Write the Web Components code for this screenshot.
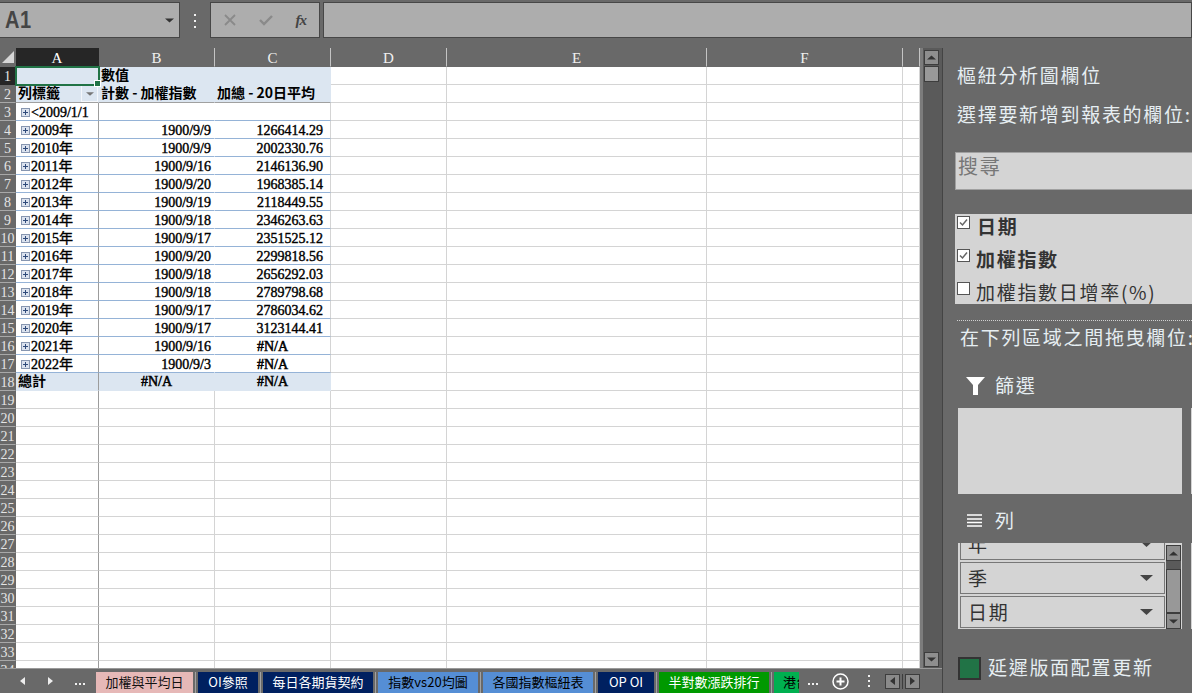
<!DOCTYPE html>
<html lang="zh-Hant"><head><meta charset="utf-8"><title>Excel</title>
<style>
html,body{margin:0;padding:0;background:#696969;overflow:hidden}
body{width:1192px;height:693px;font-family:"Noto Sans CJK TC",sans-serif}
</style></head><body>
<x-app></x-app>
<script>
const CJK='"Noto Sans CJK TC"';
function def(name,html,init){
  customElements.define(name,class extends HTMLElement{
    constructor(){super();const r=this.attachShadow({mode:'open'});r.innerHTML=typeof html==='function'?html(this):html;}
    connectedCallback(){if(init&&!this._i){this._i=1;init(this,this.shadowRoot);}}
  });
}
const dn=(c='#444',w=13,h=6)=>`<svg width="${w}" height="${h}" viewBox="0 0 13 6"><path d="M0 0H13L6.5 6Z" fill="${c}"/></svg>`;
const up=(c='#333',w=9,h=5)=>`<svg width="${w}" height="${h}" viewBox="0 0 13 6"><path d="M0 6H13L6.5 0Z" fill="${c}"/></svg>`;
const tick='<svg width="9" height="9" viewBox="0 0 9 9"><path d="M1 4.5L3.5 7L8 1.5" fill="none" stroke="#666" stroke-width="1.5"/></svg>';

def('x-formula-bar',`<style>
:host{display:flex;height:48px;box-sizing:border-box;padding-top:2px;align-items:flex-start;background:#696969}
.b{height:36px;box-sizing:border-box;background:#adadad;border:1px solid #474747;display:flex;align-items:center}
.name{width:180px;border-left:0;padding:0 5px;justify-content:space-between;font:700 20px "Liberation Sans Narrow","Liberation Sans",sans-serif;color:#454545;letter-spacing:.5px}
.name span{transform:scaleY(1.2);display:block}
.grip{width:30px;display:flex;flex-direction:column;gap:4px;align-items:center;padding-top:12px}
.grip i{width:2px;height:2px;background:#f2f2f2;display:block}
.fn{width:110px;justify-content:space-between;padding:0 13px 0 13px}
.fn em{font:italic 700 15px "Liberation Serif",serif;color:#444;letter-spacing:-1px}
.fi{margin-left:3px;flex:1}
</style>
<div class="b name"><span>A1</span>${dn('#333',9,5)}</div>
<div class="grip"><i></i><i></i><i></i></div>
<div class="b fn">
<svg width="12" height="12" viewBox="0 0 12 12"><path d="M1 1L11 11M11 1L1 11" stroke="#8a8a8a" stroke-width="1.8"/></svg>
<svg width="14" height="12" viewBox="0 0 14 12"><path d="M1 6L5 10L13 2" stroke="#8a8a8a" stroke-width="2.4" fill="none"/></svg>
<em>fx</em></div>
<div class="b fi"></div>`);

const data=[['2009年','1900/9/9','1266414.29'],['2010年','1900/9/9','2002330.76'],['2011年','1900/9/16','2146136.90'],['2012年','1900/9/20','1968385.14'],['2013年','1900/9/19','2118449.55'],['2014年','1900/9/18','2346263.63'],['2015年','1900/9/17','2351525.12'],['2016年','1900/9/20','2299818.56'],['2017年','1900/9/18','2656292.03'],['2018年','1900/9/18','2789798.68'],['2019年','1900/9/17','2786034.62'],['2020年','1900/9/17','3123144.41'],['2021年','1900/9/16','#N/A'],['2022年','1900/9/3','#N/A']];

def('x-sheet',()=>{
 const plus=`<svg class="pm" width="9" height="9" viewBox="0 0 9 9"><rect x=".5" y=".5" width="8" height="8" fill="#dbe2ee" stroke="#8796b0"/><path d="M2 4.5H7M4.5 2V7" stroke="#2f4a7a"/></svg>`;
 let h=`<div class="c corner"><svg width="12" height="12" viewBox="0 0 12 12"><path d="M12 0V12H0Z" fill="#d6d6d6"/></svg></div>`;
 h+=`<div class="c ch sel">A</div>`;
 ['B','C','D','E','F',''].forEach(l=>h+=`<div class="c ch">${l}</div>`);
 for(let r=1;r<=34;r++){
  h+=`<div class="c rh ${r==1?'rsel':''}">${r}</div>`;
  let a='',b='',c='',ca='g',cb='g',cc='g';
  if(r==1){ca='hd active';cb='hd nb';cc='hd';b='<b>數值</b>';}
  else if(r==2){ca='hd ln';cb='hd ln';cc='hd ln';a=`<b>列標籤</b><span class="fb">${dn('#777',8,4)}</span>`;b='<b>計數 - 加權指數</b>';c='<b>加總 - 20日平均</b>';}
  else if(r==3){ca='colA bl';cb='bl nr';cc='bl';a=plus+'<span class="t">&lt;2009/1/1</span>';}
  else if(r<=17){const d=data[r-4];ca='colA bl';cb='bl nr num rb';cc='bl num';a=plus+`<span class="t">${d[0]}</span>`;b=d[1];c=d[2];if(c=='#N/A')cc='bl err';}
  else if(r==18){ca='hd colA tot';cb='hd err nr';cc='hd err';a='<b>總計</b>';b='#N/A';c='#N/A';}
  else {ca='colA';}
  h+=`<div class="c ${ca}">${a}</div><div class="c ${cb}">${b}</div><div class="c ${cc}">${c}</div>`;
  for(let k=0;k<4;k++)h+=`<div class="c g"></div>`;
 }
 return `<style>
:host{display:block;width:920px;height:620px;overflow:hidden;background:#fff}
.grid{display:grid;grid-template-columns:16px 83px 116px 116px 116px 260px 196px 17px;grid-template-rows:19px;grid-auto-rows:18px;font:14px "Liberation Serif",${CJK},serif;color:#000}
.c{box-sizing:border-box;border-right:1px solid #d4d4d4;border-bottom:1px solid #d4d4d4;display:flex;align-items:center;white-space:nowrap;line-height:17px;min-width:0;-webkit-text-stroke:.4px #000;padding-top:1px}
.corner{background:#696969;border:0;padding:3px 0 0 2px;align-items:flex-start}
.ch{background:#696969;border:0;border-right:1px solid #c4c4c4;border-bottom:1px solid #696969;color:#f0f0f0;justify-content:center;font-size:15px;-webkit-text-stroke:0;padding-top:2px}
.ch.sel{background:#262626;border-right-color:#262626;border-bottom-color:#262626;color:#fff}
.rh{background:#696969;border-right:1px solid #696969;border-bottom:1px solid #a8a8a8;color:#e4e4e4;justify-content:center;font-size:14px;-webkit-text-stroke:0}
.rsel{background:#262626;border-bottom-color:#262626}
.hd{background:#dce6f1;border-right-color:#dce6f1;border-bottom-color:#dce6f1;padding-left:2px;padding-top:0}
.hd b{font:700 14px ${CJK},sans-serif;letter-spacing:0;-webkit-text-stroke:0;margin-top:-3px}
.hd.tot{padding-left:2px}
.hd.ln{border-bottom-color:#a0a0a0;position:relative}
.fb{position:absolute;right:0;top:0;width:17px;height:17px;box-sizing:border-box;border:1px solid #f4f7fb;background:#dce6f1;display:flex;align-items:center;justify-content:center}
.active{position:relative;outline:2px solid #217346;outline-offset:-1px;z-index:2}
.active::after{content:"";position:absolute;right:-3px;bottom:-3px;width:5px;height:5px;background:#217346;border:1px solid #fff}
.colA{border-right-color:#9c9c9c;padding-left:5px}
.pm{flex:none;margin-right:1px}
.bl{border-bottom-color:#95b3d7}
.nr{border-right-color:#fff}
.hd.nr{border-right-color:#dce6f1}
.num{justify-content:flex-end;padding-right:7px}
.rb{padding-right:3px}
.err{justify-content:center;-webkit-text-stroke:.5px #000;padding-left:0}
</style><div class="grid">${h}</div>`;
});

def('x-vscroll',`<style>
:host{display:flex;flex-direction:column;box-sizing:border-box;width:22px;height:620px;background:#5a5a5a;border-left:3px solid #7c7c7c;padding:2px 3px 0 1px}
.b{height:15px;box-sizing:border-box;background:#8e8e8e;border:1px solid #3d3d3d;display:flex;align-items:center;justify-content:center;flex:none}
.th{height:16px;margin-top:1px;box-sizing:border-box;background:#999;border:1px solid #3d3d3d;flex:none}
.sp{flex:1}
</style><div class="b">${up()}</div><div class="th"></div><div class="sp"></div><div class="b" style="margin-bottom:1px">${dn('#333',9,5)}</div>`);

def('x-tab',`<style>
:host{display:flex;box-sizing:border-box;margin-left:2px;padding-left:2px;border-left:1px solid #a2a2a2;height:22px;flex:none}
div{width:100%;height:22px;display:flex;align-items:center;justify-content:var(--jc,center);padding-left:var(--pl,0);font:13px ${CJK},sans-serif;overflow:hidden;white-space:nowrap;background:var(--bg);color:var(--fg);padding-bottom:3px;box-sizing:border-box}
</style><div><slot></slot></div>`);

def('x-tabs',`<style>
:host{display:flex;height:25px;box-sizing:border-box;padding-top:3px;border-top:1px solid #9a9a9a;background:#696969;align-items:flex-start;overflow:hidden}
.nav{display:flex;width:93px;flex:none;height:22px;align-items:center;color:#fff;padding-bottom:4px;box-sizing:border-box}
.nav svg{margin-left:20px}
.nav svg+svg{margin-left:23px}
.dots{display:flex;gap:2px;margin-left:22px;margin-top:6px}
.dots i{width:2px;height:2px;background:#f0f0f0;display:block}
.end{display:flex;align-items:center;height:22px;flex:none;padding-bottom:4px;box-sizing:border-box}
.end .dots{margin:6px 0 0 9px}
.add{margin-left:14px}
.vd{display:flex;flex-direction:column;gap:3px;margin-left:19px}
.vd i{width:2px;height:2px;background:#f0f0f0;display:block}
.sb{display:flex;margin-left:15px;align-items:stretch}
.sb span{width:15px;height:15px;box-sizing:border-box;background:#8a8a8a;border:1px solid #3d3d3d;display:flex;align-items:center;justify-content:center}
.sb b{width:1px;background:#3d3d3d;margin:0 2px;display:block}
</style>
<div class="nav">
<svg width="5" height="8" viewBox="0 0 5 8"><path d="M5 0V8L0 4Z" fill="#eee"/></svg>
<svg width="5" height="8" viewBox="0 0 5 8"><path d="M0 0V8L5 4Z" fill="#eee"/></svg>
<div class="dots"><i></i><i></i><i></i></div>
</div>
<x-tab style="width:100px;--bg:#e6b8b7;--fg:#111;border-left-color:#696969;margin-left:0">加權與平均日</x-tab>
<x-tab style="width:63px;--bg:#002060;--fg:#fff">OI參照</x-tab>
<x-tab style="width:113px;--bg:#002060;--fg:#fff">每日各期貨契約</x-tab>
<x-tab style="width:103px;--bg:#558ed5;--fg:#000">指數vs20均圖</x-tab>
<x-tab style="width:113px;--bg:#558ed5;--fg:#000">各國指數樞紐表</x-tab>
<x-tab style="width:59px;--bg:#002060;--fg:#fff">OP OI</x-tab>
<x-tab style="width:113px;--bg:#009900;--fg:#fff">半對數漲跌排行</x-tab>
<x-tab style="width:28px;--bg:#00b050;--fg:#000;--jc:flex-start;--pl:9px">港台指數</x-tab>
<div class="end">
<div class="dots"><i></i><i></i><i></i></div>
<svg class="add" width="17" height="17" viewBox="0 0 17 17"><circle cx="8.5" cy="8.5" r="7.5" fill="none" stroke="#fff" stroke-width="1.5"/><path d="M4.5 8.5H12.5M8.5 4.5V12.5" stroke="#fff" stroke-width="2"/></svg>
<div class="vd"><i></i><i></i><i></i></div>
<div class="sb"><span><svg width="5" height="8" viewBox="0 0 5 8"><path d="M5 0V8L0 4Z" fill="#333"/></svg></span><b></b><span><svg width="5" height="8" viewBox="0 0 5 8"><path d="M0 0V8L5 4Z" fill="#333"/></svg></span></div>
</div>`);

def('x-check',`<style>:host{display:block;width:13px;height:13px;flex:none}
 div{width:13px;height:13px;box-sizing:border-box;background:#fff;border:1px solid #555;display:flex;align-items:center;justify-content:center}</style>
 <div><slot></slot></div>`);

def('x-field',`<style>
:host{display:flex;height:33px;flex:none;box-sizing:border-box;padding-left:2px;color:#333}
x-check{margin-top:6px}
span{margin-left:var(--ml,7px);line-height:31px;font-size:19px;letter-spacing:1.7px;font-weight:var(--w,400);white-space:nowrap}
</style><x-check></x-check><span><slot></slot></span>`,(el,r)=>{if(el.hasAttribute('checked'))r.querySelector('x-check').innerHTML=tick;});

def('x-pill',`<style>
:host{display:flex;flex:none;width:205px;height:32px;margin-left:1px;box-sizing:border-box;background:#d4d4d4;border:1px solid #777;align-items:center;justify-content:space-between;padding:0 11px 0 7px;font-size:19px;letter-spacing:1.7px;color:#333}
span{margin-top:-2px}
</style><span><slot></slot></span>${dn('#444')}`);

def('x-panel',`<style>
:host{display:flex;flex-direction:column;box-sizing:border-box;width:250px;height:645px;background:#696969;border-left:1px solid #444;padding-left:12px;overflow:hidden;font-size:19px;letter-spacing:1.7px;color:#e6eef2;white-space:nowrap}
.line{height:30px;line-height:28px;flex:none}
.title{margin:13px 0 0 2px}
.sel{margin:9px 0 0 2px}
.search{height:38px;flex:none;margin-top:22px;box-sizing:border-box;background:#d4d4d4;border:1px solid #a0a0a0;border-right:0;color:#777;padding-left:2px;line-height:26px;font-size:20px}
.list{height:90px;flex:none;margin-top:24px;background:#d4d4d4;overflow:hidden}
.inner{margin-top:-4px}
.dot{height:0;flex:none;margin:16px 0 0 2px;border-top:1px dotted #d0d0d0}
.drag{margin:2px 0 0 5px}
.h{display:flex;align-items:center}
.h span{margin-top:-3px}
.filter{margin:18px 0 0 11px}
.rows{margin:12px 0 0 12px}
.h svg{flex:none;margin-top:-1px}
.boxes{display:flex;gap:9px;margin:7px 0 0 3px;height:86px;flex:none}
.boxes>div{background:#d4d4d4;height:86px;flex:none}
.boxes>.a{width:224px}.boxes>.r{width:20px}
.boxes>.area{width:224px;display:flex;box-sizing:border-box;border-left:1px solid #d4d4d4}
.pills{width:206px;flex:none;display:flex;flex-direction:column;justify-content:flex-end;gap:2px;overflow:hidden;padding-bottom:1px;box-sizing:border-box;height:86px;background:#d4d4d4}
.vs{width:17px;flex:none;background:#d4d4d4;box-sizing:border-box;padding:2px 1px 2px 1px;display:flex;flex-direction:column;height:86px}
.vs i{display:flex;align-items:center;justify-content:center;height:16px;box-sizing:border-box;background:#8e8e8e;border:1px solid #3d3d3d;flex:none}
.vs u{display:block;height:8px;background:#5a5a5a;flex:none}
.vs s{display:block;height:44px;background:#989898;border:1px solid #3d3d3d;box-sizing:border-box;flex:none}
.defer{display:flex;align-items:center;margin:28px 0 0 3px;height:23px;flex:none}
.sw{width:23px;height:23px;box-sizing:border-box;background:#217346;border:2px solid #333;flex:none}
.defer span{margin-left:7px;margin-top:-4px}
</style>
<div class="line title">樞紐分析圖欄位</div>
<div class="line sel">選擇要新增到報表的欄位:</div>
<div class="search">搜尋</div>
<div class="list"><div class="inner">
<x-field checked style="--w:700">日期</x-field>
<x-field checked style="--w:700;--ml:6px">加權指數</x-field>
<x-field style="--ml:6px">加權指數日增率(%)</x-field>
</div></div>
<div class="dot"></div>
<div class="line drag">在下列區域之間拖曳欄位:</div>
<div class="line h filter"><svg width="19" height="18" viewBox="0 0 19 18"><path d="M0 0H19L12 8V18H7V8Z" fill="#fff"/></svg><span style="margin-left:10px">篩選</span></div>
<div class="boxes"><div class="a"></div><div class="r"></div></div>
<div class="line h rows"><svg width="15" height="13" viewBox="0 0 15 13"><path d="M0 1H15M0 5H15M0 8.5H15M0 12H15" stroke="#fff" stroke-width="1.3"/></svg><span style="margin-left:13px">列</span></div>
<div class="boxes"><div class="area"><div class="pills"><x-pill>年</x-pill><x-pill>季</x-pill><x-pill>日期</x-pill></div><div class="vs"><i>${up()}</i><u></u><s></s><i>${dn('#333',9,5)}</i></div></div><div class="r"></div></div>
<div class="defer"><div class="sw"></div><span>延遲版面配置更新</span></div>`);

def('x-app',`<style>
:host{display:flex;flex-direction:column;width:1192px;height:693px;background:#696969}
.main{display:flex;height:645px}
.left{width:942px;display:flex;flex-direction:column;flex:none}
.top{display:flex;height:620px;flex:none}
</style>
<x-formula-bar></x-formula-bar>
<div class="main"><div class="left"><div class="top"><x-sheet></x-sheet><x-vscroll></x-vscroll></div><x-tabs></x-tabs></div><x-panel></x-panel></div>`);
</script>
</body></html>
